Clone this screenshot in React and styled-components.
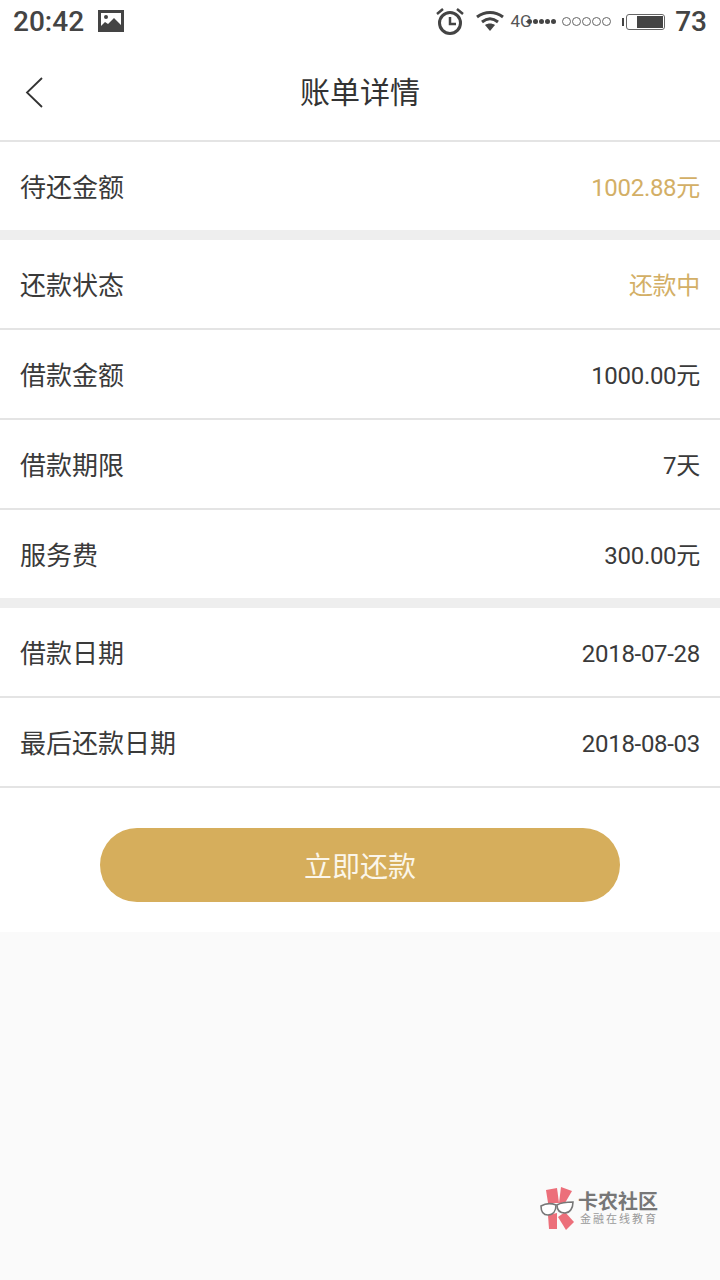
import styled, { createGlobalStyle } from "styled-components";

const GlobalStyle = createGlobalStyle`
  html, body {
    margin: 0;
    padding: 0;
    background: #fafafa;
    font-family: "Roboto", "Noto Sans CJK SC", sans-serif;
  }
`;

const sections = [
  [{ label: "待还金额", value: "1002.88元", gold: true }],
  [
    { label: "还款状态", value: "还款中", gold: true },
    { label: "借款金额", value: "1000.00元" },
    { label: "借款期限", value: "7天" },
    { label: "服务费", value: "300.00元" },
  ],
  [
    { label: "借款日期", value: "2018-07-28" },
    { label: "最后还款日期", value: "2018-08-03" },
  ],
];

const App = () => {
  return (
    <Page>
      <GlobalStyle />
      <StatusBar>
        <StatusLeft>
          <Clock>20:42</Clock>
          <svg width="26" height="22" viewBox="0 0 26 22">
            <path
              fillRule="evenodd"
              d="M0 0h26v22H0zM3 3v16h20V3z"
              fill="#444"
            />
            <path d="M3 19v-3l4-4 3 2 6-6 7 7v4z" fill="#444" />
            <circle cx="8" cy="7" r="2" fill="#444" />
          </svg>
        </StatusLeft>
        <StatusRight>
          <AlarmIcon width="28" height="28" viewBox="0 0 28 28" fill="none" stroke="#444">
            <circle cx="14" cy="15" r="10.5" strokeWidth="3" />
            <path d="M14 9v7h6" strokeWidth="2.5" />
            <path d="M1 6l6-5M27 6l-6-5" strokeWidth="2.5" />
          </AlarmIcon>
          <WifiIcon width="28" height="20" viewBox="0 0 28 20" fill="none" stroke="#444" strokeWidth="3">
            <path d="M1 6c8-6 18-6 26 0M6 11c5-4 11-4 16 0" />
            <path d="M9 14c3-2 7-2 10 0l-5 6z" fill="#444" stroke="none" />
          </WifiIcon>
          <Signal>
            <SignalLabel>4G</SignalLabel>
            <Dots>
              {[0, 1, 2, 3, 4].map((i) => (
                <FilledDot key={i} />
              ))}
            </Dots>
            <Dots>
              {[0, 1, 2, 3, 4].map((i) => (
                <HollowDot key={i} />
              ))}
            </Dots>
          </Signal>
          <Battery>
            <BatteryCap />
            <BatteryBody>
              <BatteryFill />
            </BatteryBody>
          </Battery>
          <Level>73</Level>
        </StatusRight>
      </StatusBar>
      <NavBar>
        <BackIcon width="20" height="32" viewBox="0 0 20 32" fill="none" stroke="#333" strokeWidth="1.8">
          <path d="M17 1L2 15.5 17 30" />
        </BackIcon>
        <Title>账单详情</Title>
      </NavBar>
      <Card>
        {sections.map((rows, s) => (
          <Section key={s}>
            {rows.map((row) => (
              <Row key={row.label}>
                <Label>{row.label}</Label>
                <Value $gold={row.gold}>{row.value}</Value>
              </Row>
            ))}
          </Section>
        ))}
        <ButtonArea>
          <PayButton>立即还款</PayButton>
        </ButtonArea>
      </Card>
      <Footer>
        <Watermark>
          <svg width="36" height="44" viewBox="4 4 36 44">
            <path d="M10 8l11-2 2 15H12z" fill="#ec6f7a" />
            <path d="M25 5l11 4-7 12h-6z" fill="#ec6f7a" />
            <path d="M12 33l9-2v16h-8z" fill="#ec6f7a" />
            <path d="M29 30l9 10-8 8-8-13z" fill="#ec6f7a" />
            <path d="M5 24c5-3 10-3 15-1 0 6-3 10-8 10s-7-4-7-9z" fill="#fff" stroke="#777" strokeWidth="1.6" />
            <path d="M21 23c5-3 11-3 16-3 0 6-3 11-8 11s-8-3-8-8z" fill="#fff" stroke="#777" strokeWidth="1.6" />
          </svg>
          <MarkText>
            <MarkName>卡农社区</MarkName>
            <MarkSub>金融在线教育</MarkSub>
          </MarkText>
        </Watermark>
      </Footer>
    </Page>
  );
};

export default App;

const Page = styled.div`
  width: 720px;
  height: 1280px;
  display: flex;
  flex-direction: column;
  overflow: hidden;
  background: #fafafa;
`;

const StatusBar = styled.div`
  height: 44px;
  background: #fff;
  display: flex;
  align-items: center;
  justify-content: space-between;
  padding: 0 13px 2px 13px;
  box-sizing: border-box;
  color: #444;
`;

const StatusLeft = styled.div`
  display: flex;
  align-items: center;
  gap: 14px;
`;

const Clock = styled.span`
  font-size: 28px;
  font-weight: 500;
`;

const StatusRight = styled.div`
  display: flex;
  align-items: center;
`;

const AlarmIcon = styled.svg`
  margin: 2px 12px 0 0;
`;

const WifiIcon = styled.svg`
  margin-right: 7px;
`;

const Signal = styled.div`
  display: flex;
  align-items: center;
  margin-right: 10px;
`;

const SignalLabel = styled.span`
  font-size: 17px;
  margin-right: -5px;
  color: #555;
`;

const Dots = styled.span`
  display: flex;
  align-items: center;
  margin-right: 5.5px;
  &:last-child {
    margin-right: 0;
  }
`;

const FilledDot = styled.span`
  width: 5px;
  height: 5px;
  margin-right: 1px;
  border-radius: 50%;
  background: #444;
`;

const HollowDot = styled.span`
  width: 9px;
  height: 9px;
  margin-right: 1px;
  box-sizing: border-box;
  border-radius: 50%;
  border: 1px solid #666;
`;

const Battery = styled.div`
  display: flex;
  align-items: center;
  margin-top: 2px;
`;

const BatteryCap = styled.span`
  width: 2px;
  height: 8px;
  background: #444;
  margin-right: 2px;
`;

const BatteryBody = styled.span`
  width: 39px;
  height: 16px;
  border: 1px solid #666;
  border-radius: 3px;
  box-sizing: border-box;
  display: flex;
  justify-content: flex-end;
  padding: 1px;
`;

const BatteryFill = styled.span`
  width: 26px;
  background: #444;
`;

const Level = styled.span`
  font-size: 28px;
  font-weight: 500;
  margin-left: 10px;
`;

const NavBar = styled.div`
  position: relative;
  height: 98px;
  background: #fff;
  border-bottom: 2px solid #e4e4e4;
  box-sizing: border-box;
  display: flex;
  align-items: center;
  justify-content: center;
  padding-bottom: 4px;
`;

const BackIcon = styled.svg`
  position: absolute;
  left: 25px;
  top: 33px;
`;

const Title = styled.h1`
  margin: 0;
  font-size: 30px;
  font-weight: 400;
  color: #333;
`;

const Card = styled.div`
  background: #fff;
`;

const Section = styled.div`
  border-bottom: 10px solid #eee;
  &:nth-of-type(3) {
    border-bottom: none;
  }
`;

const Row = styled.div`
  height: 90px;
  box-sizing: border-box;
  display: flex;
  align-items: center;
  justify-content: space-between;
  padding: 4px 20px 0;
  border-bottom: 2px solid #e4e4e4;
  ${Section}:not(:nth-of-type(3)) &:last-child {
    height: 88px;
    border-bottom: none;
  }
`;

const Label = styled.span`
  font-size: 26px;
  line-height: 30px;
  color: #3a3a3a;
`;

const Value = styled.span`
  font-size: 24px;
  line-height: 30px;
  letter-spacing: -0.3px;
  color: ${(p) => (p.$gold ? "#d3af66" : "#3a3a3a")};
`;

const ButtonArea = styled.div`
  padding: 40px 100px 30px;
`;

const PayButton = styled.button`
  display: block;
  width: 100%;
  height: 74px;
  border: none;
  border-radius: 37px;
  background: #d6ae5c;
  color: #fbf6ea;
  font-family: inherit;
  font-size: 28px;
  padding-bottom: 2px;
`;

const Footer = styled.div`
  flex: 1;
  display: flex;
  justify-content: flex-end;
  align-items: flex-end;
  padding: 0 62px 50px 0;
`;

const Watermark = styled.div`
  display: flex;
  align-items: center;
  gap: 2px;
`;

const MarkText = styled.div`
  display: flex;
  flex-direction: column;
`;

const MarkName = styled.span`
  font-size: 20px;
  font-weight: 700;
  color: #777;
  line-height: 22px;
`;

const MarkSub = styled.span`
  font-size: 11px;
  letter-spacing: 2px;
  line-height: 13px;
  margin-left: 2px;
  color: #999;
`;
